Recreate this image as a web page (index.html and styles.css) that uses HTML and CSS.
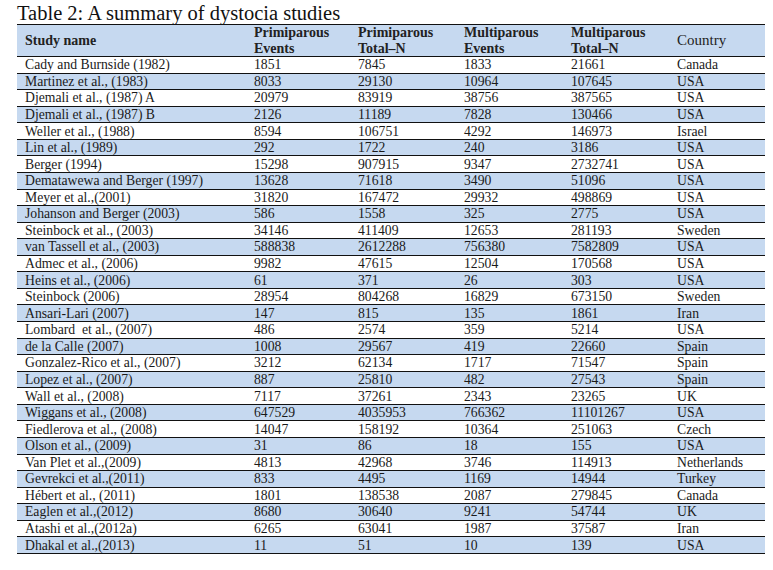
FILE: index.html
```html
<!DOCTYPE html>
<html>
<head>
<meta charset="utf-8">
<link rel="stylesheet" href="styles.css">
</head>
<body>
<div class="page">
<h1 class="title">Table 2: A summary of dystocia studies</h1>
<table class="summary">
<colgroup>
<col class="c-name"><col class="c-num"><col class="c-num2"><col class="c-num3"><col class="c-num2"><col class="c-country">
</colgroup>
<thead>
<tr>
<th>Study name</th>
<th>Primiparous<br>Events</th>
<th>Primiparous<br>Total–N</th>
<th>Multiparous<br>Events</th>
<th>Multiparous<br>Total–N</th>
<th class="country">Country</th>
</tr>
</thead>
<tbody>
<tr><td>Cady and Burnside (1982)</td><td>1851</td><td>7845</td><td>1833</td><td>21661</td><td>Canada</td></tr>
<tr><td>Martinez et al., (1983)</td><td>8033</td><td>29130</td><td>10964</td><td>107645</td><td>USA</td></tr>
<tr><td>Djemali et al., (1987) A</td><td>20979</td><td>83919</td><td>38756</td><td>387565</td><td>USA</td></tr>
<tr><td>Djemali et al., (1987) B</td><td>2126</td><td>11189</td><td>7828</td><td>130466</td><td>USA</td></tr>
<tr><td>Weller et al., (1988)</td><td>8594</td><td>106751</td><td>4292</td><td>146973</td><td>Israel</td></tr>
<tr><td>Lin et al., (1989)</td><td>292</td><td>1722</td><td>240</td><td>3186</td><td>USA</td></tr>
<tr><td>Berger (1994)</td><td>15298</td><td>907915</td><td>9347</td><td>2732741</td><td>USA</td></tr>
<tr><td>Dematawewa and Berger (1997)</td><td>13628</td><td>71618</td><td>3490</td><td>51096</td><td>USA</td></tr>
<tr><td>Meyer et al.,(2001)</td><td>31820</td><td>167472</td><td>29932</td><td>498869</td><td>USA</td></tr>
<tr><td>Johanson and Berger (2003)</td><td>586</td><td>1558</td><td>325</td><td>2775</td><td>USA</td></tr>
<tr><td>Steinbock et al., (2003)</td><td>34146</td><td>411409</td><td>12653</td><td>281193</td><td>Sweden</td></tr>
<tr><td>van Tassell et al., (2003)</td><td>588838</td><td>2612288</td><td>756380</td><td>7582809</td><td>USA</td></tr>
<tr><td>Admec et al., (2006)</td><td>9982</td><td>47615</td><td>12504</td><td>170568</td><td>USA</td></tr>
<tr><td>Heins et al., (2006)</td><td>61</td><td>371</td><td>26</td><td>303</td><td>USA</td></tr>
<tr><td>Steinbock (2006)</td><td>28954</td><td>804268</td><td>16829</td><td>673150</td><td>Sweden</td></tr>
<tr><td>Ansari-Lari (2007)</td><td>147</td><td>815</td><td>135</td><td>1861</td><td>Iran</td></tr>
<tr><td>Lombard&nbsp; et al., (2007)</td><td>486</td><td>2574</td><td>359</td><td>5214</td><td>USA</td></tr>
<tr><td>de la Calle (2007)</td><td>1008</td><td>29567</td><td>419</td><td>22660</td><td>Spain</td></tr>
<tr><td>Gonzalez-Rico et al., (2007)</td><td>3212</td><td>62134</td><td>1717</td><td>71547</td><td>Spain</td></tr>
<tr><td>Lopez et al., (2007)</td><td>887</td><td>25810</td><td>482</td><td>27543</td><td>Spain</td></tr>
<tr><td>Wall et al., (2008)</td><td>7117</td><td>37261</td><td>2343</td><td>23265</td><td>UK</td></tr>
<tr><td>Wiggans et al., (2008)</td><td>647529</td><td>4035953</td><td>766362</td><td>11101267</td><td>USA</td></tr>
<tr><td>Fiedlerova et al., (2008)</td><td>14047</td><td>158192</td><td>10364</td><td>251063</td><td>Czech</td></tr>
<tr><td>Olson et al., (2009)</td><td>31</td><td>86</td><td>18</td><td>155</td><td>USA</td></tr>
<tr><td>Van Plet et al.,(2009)</td><td>4813</td><td>42968</td><td>3746</td><td>114913</td><td>Netherlands</td></tr>
<tr><td>Gevrekci et al.,(2011)</td><td>833</td><td>4495</td><td>1169</td><td>14944</td><td>Turkey</td></tr>
<tr><td>Hébert et al., (2011)</td><td>1801</td><td>138538</td><td>2087</td><td>279845</td><td>Canada</td></tr>
<tr><td>Eaglen et al.,(2012)</td><td>8680</td><td>30640</td><td>9241</td><td>54744</td><td>UK</td></tr>
<tr><td>Atashi et al.,(2012a)</td><td>6265</td><td>63041</td><td>1987</td><td>37587</td><td>Iran</td></tr>
<tr><td>Dhakal et al.,(2013)</td><td>11</td><td>51</td><td>10</td><td>139</td><td>USA</td></tr>
</tbody>
</table>
</div>
</body>
</html>
```
FILE: styles.css
```css
html, body {
  margin: 0;
  padding: 0;
  background: #ffffff;
}
.page {
  padding: 2px 8px 0 17px;
  font-family: "Liberation Serif", "DejaVu Serif", serif;
  color: #1a1a1a;
}
.title {
  margin: 0;
  font-size: 20.5px;
  font-weight: normal;
  line-height: 22px;
  color: #111;
}
.summary {
  border-collapse: collapse;
  width: 748px;
  table-layout: fixed;
  font-size: 13.7px;
}
.c-name { width: 229px; }
.c-num { width: 104px; }
.c-num2 { width: 106px; }
.c-num3 { width: 107px; }
.c-country { width: 96px; }
.summary th {
  text-align: left;
  font-weight: bold;
  font-size: 14px;
  line-height: 15.5px;
  padding: 0 8px;
  height: 31px;
  background: #c6d9f0;
  border-top: 1px solid #111;
  border-bottom: 1px solid #111;
  vertical-align: middle;
  color: #222;
}
.summary th.country {
  font-weight: normal;
  font-size: 15px;
}
.summary td {
  padding: 0 8px;
  height: 15.57px;
  line-height: 15px;
  border-bottom: 1px solid #111;
  white-space: nowrap;
  vertical-align: middle;
}
.summary tbody tr:nth-child(even) td {
  background: #c6d9f0;
}
```
